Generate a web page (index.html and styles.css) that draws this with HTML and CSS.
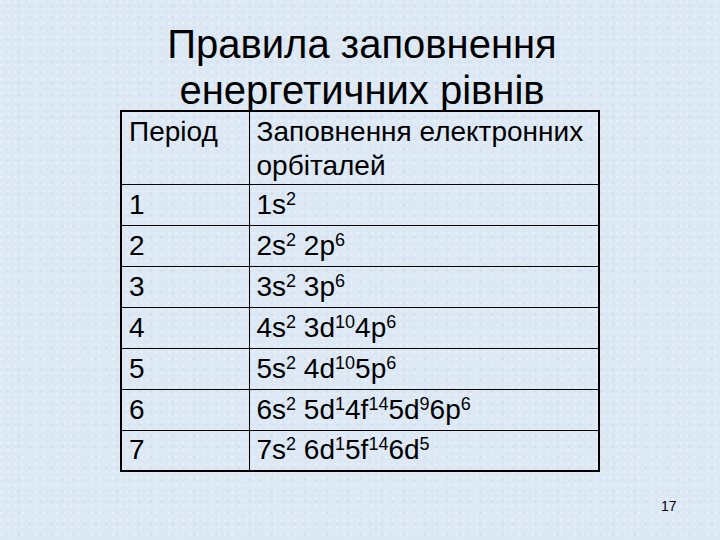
FILE: index.html
```html
<!DOCTYPE html>
<html lang="uk">
<head>
<meta charset="utf-8">
<link rel="stylesheet" href="styles.css">
</head>
<body>
<div class="slide">
  <h1 class="title">Правила заповнення<br>енергетичних рівнів</h1>
  <table class="grid">
    <tr class="head">
      <td class="c1">Період</td>
      <td class="c2">Заповнення електронних орбіталей</td>
    </tr>
    <tr><td class="c1">1</td><td class="c2">1s<sup>2</sup></td></tr>
    <tr><td class="c1">2</td><td class="c2">2s<sup>2</sup> 2p<sup>6</sup></td></tr>
    <tr><td class="c1">3</td><td class="c2">3s<sup>2</sup> 3p<sup>6</sup></td></tr>
    <tr><td class="c1">4</td><td class="c2">4s<sup>2</sup> 3d<sup>10</sup>4p<sup>6</sup></td></tr>
    <tr><td class="c1">5</td><td class="c2">5s<sup>2</sup> 4d<sup>10</sup>5p<sup>6</sup></td></tr>
    <tr><td class="c1">6</td><td class="c2">6s<sup>2</sup> 5d<sup>1</sup>4f<sup>14</sup>5d<sup>9</sup>6p<sup>6</sup></td></tr>
    <tr class="last"><td class="c1">7</td><td class="c2">7s<sup>2</sup> 6d<sup>1</sup>5f<sup>14</sup>6d<sup>5</sup></td></tr>
  </table>
  <div class="pagenum">17</div>
</div>
</body>
</html>
```

FILE: styles.css
```css
html, body {
  margin: 0;
  padding: 0;
}
body {
  width: 720px;
  height: 540px;
  overflow: hidden;
  background-color: #dde8f5;
  background-image:
    radial-gradient(circle at 20% 30%, rgba(255,255,255,0.25) 0 1px, transparent 2px),
    radial-gradient(circle at 70% 60%, rgba(180,200,225,0.25) 0 1px, transparent 2px);
  background-size: 7px 7px, 11px 11px;
  font-family: "Liberation Sans", Arial, sans-serif;
  color: #000;
}
.slide {
  position: relative;
  width: 720px;
  height: 540px;
  padding-top: 21px;
  box-sizing: border-box;
}
.title {
  margin: 0 0 0 4px;
  font-weight: normal;
  font-size: 40px;
  line-height: 46px;
  text-align: center;
  height: 89px;
}
.grid {
  margin-left: 120px;
  width: 480px;
  border-collapse: collapse;
  border: 2px solid #000;
  font-size: 28px;
  line-height: 34px;
}
.grid td {
  border: 1px solid #000;
  padding: 0 7px;
  vertical-align: middle;
  height: 41px;
  box-sizing: border-box;
}
.grid .c1 {
  width: 128px;
}
.grid .head td {
  height: 73px;
  vertical-align: top;
  padding-top: 3px;
}
.grid sup {
  font-size: 18px;
  line-height: 0;
  vertical-align: 9px;
}
.pagenum {
  position: absolute;
  left: 661px;
  top: 498px;
  font-size: 14px;
}
```
